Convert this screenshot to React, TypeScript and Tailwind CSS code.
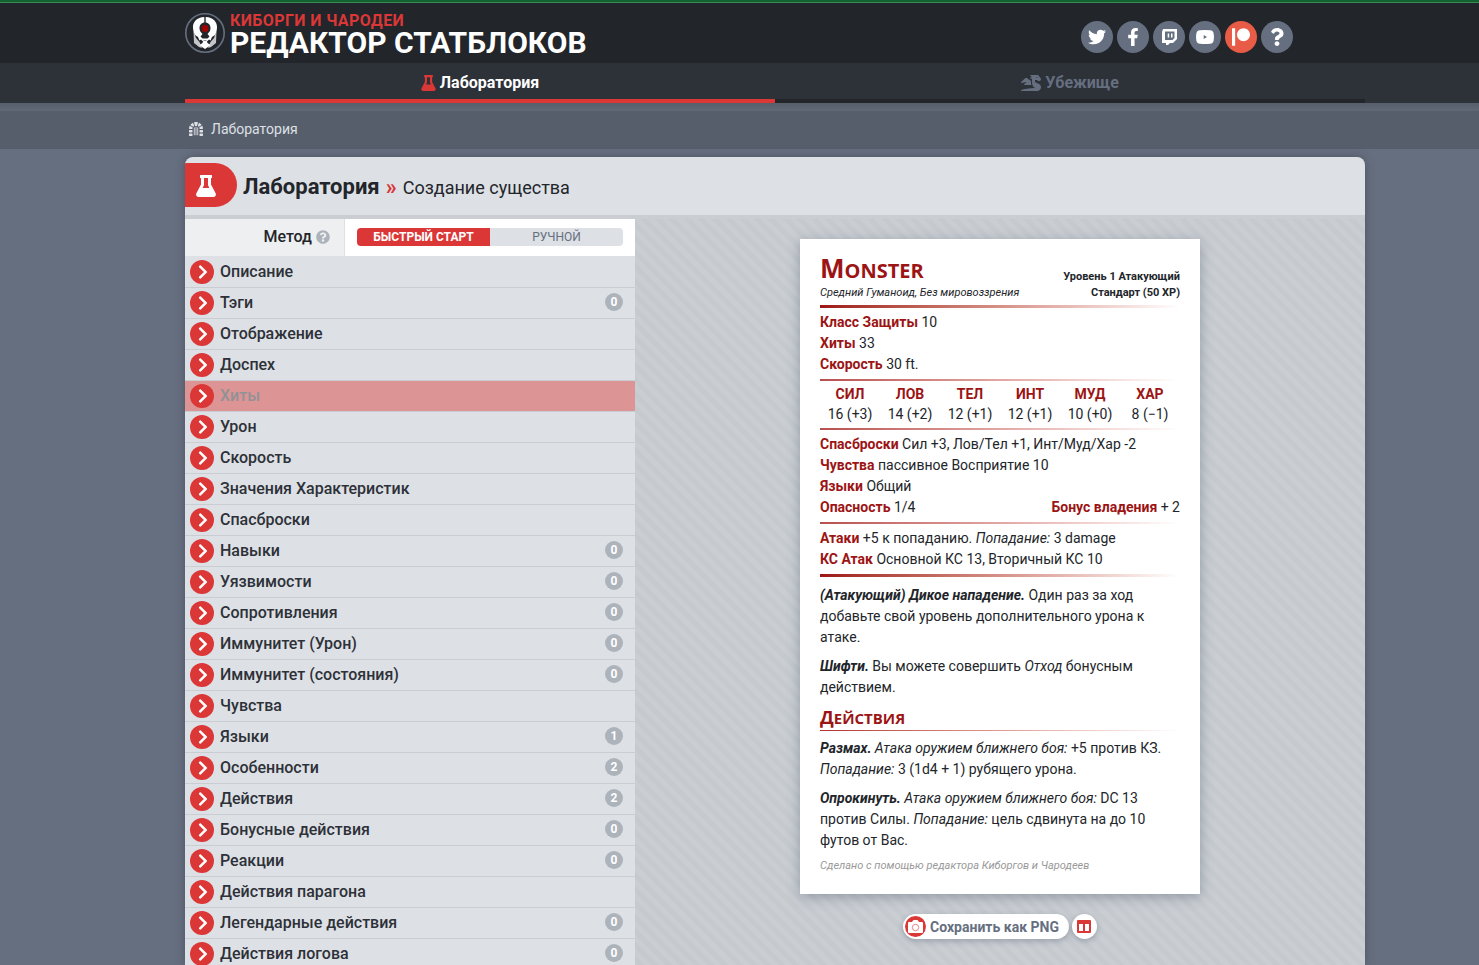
import React from "react";
import {
  FaChevronRight,
  FaDragon,
  FaDungeon,
  FaFacebookF,
  FaPatreon,
  FaQuestion,
  FaQuestionCircle,
  FaTwitter,
} from "react-icons/fa";

const sections: { label: string; count?: number; missing?: boolean }[] = [
  { label: "Описание" },
  { label: "Тэги", count: 0 },
  { label: "Отображение" },
  { label: "Доспех" },
  { label: "Хиты", missing: true },
  { label: "Урон" },
  { label: "Скорость" },
  { label: "Значения Характеристик" },
  { label: "Спасброски" },
  { label: "Навыки", count: 0 },
  { label: "Уязвимости", count: 0 },
  { label: "Сопротивления", count: 0 },
  { label: "Иммунитет (Урон)", count: 0 },
  { label: "Иммунитет (состояния)", count: 0 },
  { label: "Чувства" },
  { label: "Языки", count: 1 },
  { label: "Особенности", count: 2 },
  { label: "Действия", count: 2 },
  { label: "Бонусные действия", count: 0 },
  { label: "Реакции", count: 0 },
  { label: "Действия парагона" },
  { label: "Легендарные действия", count: 0 },
  { label: "Действия логова", count: 0 },
];

const abilities = [
  ["СИЛ", "16 (+3)"],
  ["ЛОВ", "14 (+2)"],
  ["ТЕЛ", "12 (+1)"],
  ["ИНТ", "12 (+1)"],
  ["МУД", "10 (+0)"],
  ["ХАР", "8 (−1)"],
];

function Flask({ className }: { className: string }) {
  return (
    <svg viewBox="0 0 20 22" fill="currentColor" fillRule="evenodd" className={className} aria-hidden="true">
      <path d="M4.500 0h11a.5.5 0 0 1 .5.5v2a.5.5 0 0 1-.5.5H15v6.500l4.600 8.700A2.600 2.600 0 0 1 17.400 22H2.600A2.600 2.600 0 0 1 .4 18.200L5 9.500V3h-.5a.5.5 0 0 1-.5-.5v-2a.5.5 0 0 1 .5-.5zM8 3v7l-1.300 3h6.600L12 10V3z" />
    </svg>
  );
}

function Twitch() {
  return (
    <svg viewBox="0 0 15 16" fill="currentColor" fillRule="evenodd" className="h-4 w-[15px]" aria-hidden="true">
      <path d="M1 0h14v10l-4 4H8l-2 2H4v-2H0V3zM3 2.500v8.500h7.500l2-2V2.500z" />
      <path d="M5.700 4.500h1.500v4H5.700zM9 4.500h1.500v4H9z" />
    </svg>
  );
}

function YouTube() {
  return (
    <svg viewBox="0 0 18 14" fill="currentColor" fillRule="evenodd" className="h-3.5 w-[18px]" aria-hidden="true">
      <path d="M4 .3Q9-.3 14 .3Q17.500.5 17.700 4Q18.200 7 17.700 10Q17.500 13.500 14 13.700Q9 14.300 4 13.700Q.5 13.500.3 10Q-.2 7 .3 4Q.5.5 4 .3zM7.700 5v4l3.300-2z" />
    </svg>
  );
}

function Camera() {
  return (
    <svg viewBox="0 0 15 13" className="h-[13px] w-[15px]" aria-hidden="true">
      <path d="M1 2h3l1-1.500Q5.200 0 6 0h3q.8 0 1 .5L11 2h3q1 0 1 1v9q0 1-1 1H1q-1 0-1-1V3q0-1 1-1z" fill="#fff" />
      <circle cx="7.500" cy="7.500" r="3.200" fill="none" stroke="#db3737" strokeWidth=".6" />
    </svg>
  );
}

function Columns() {
  return (
    <svg viewBox="0 0 14 13" fill="currentColor" fillRule="evenodd" className="h-[13px] w-3.5" aria-hidden="true">
      <path d="M1 0h12q1 0 1 1v11q0 1-1 1H1q-1 0-1-1V1q0-1 1-1zM2 4v7h4V4zM8 4v7h4V4z" />
    </svg>
  );
}

const socials = [
  { name: "Twitter", Icon: FaTwitter, color: "bg-[#666f80]" },
  { name: "Facebook", Icon: FaFacebookF, color: "bg-[#666f80]" },
  { name: "Twitch", Icon: Twitch, color: "bg-[#666f80]" },
  { name: "YouTube", Icon: YouTube, color: "bg-[#666f80]" },
  { name: "Patreon", Icon: FaPatreon, color: "bg-[#e85b46]" },
  { name: "Помощь", Icon: FaQuestion, color: "bg-[#666f80]" },
];

function Logo() {
  return (
    <svg viewBox="0 0 40 40" className="size-10 shrink-0" aria-hidden="true">
      <circle cx="20" cy="20" r="19.200" fill="#22252a" stroke="#666f80" strokeWidth="1.600" />
      <path d="M8.500 18 L9 30 L14 34 L17 35 L14.500 29 L11 25 Z M31.500 18 L31 30 L26 34 L23 35 L25.500 29 L29 25 Z" fill="#c4c6c9" />
      <path
        d="M19.300 4 C12 4.300 7.500 9 8 15 C8.200 18 9 20 10 22 L13 24 L14.500 27.500 L16 26.500 L18 28.500 L19 27 H21 L22 28.500 L24 26.500 L25.500 27.500 L27 24 L30 22 C31 20 31.800 18 32 15 C32.500 9 28 4.300 20.700 4 V10 H19.300 Z"
        fill="#fff"
      />
      <path d="M20 9.500 C16.500 9.500 14.300 12 14.500 15.500 C14.700 18 16 19.500 17.500 21 L15.500 23.500 L17.500 25.500 H22.500 L24.500 23.500 L22.500 21 C24 19.500 25.300 18 25.500 15.500 C25.700 12 23.500 9.500 20 9.500 Z" fill="#22252a" />
      <circle cx="20" cy="15.500" r="3.400" fill="#a00000" />
      <path d="M14.500 32 L17.500 30 L18.500 27.500 H21.500 L22.500 30 L25.500 32 L23 34 L20 36 L17 34 Z" fill="#fff" />
    </svg>
  );
}

function Term({ children }: { children: React.ReactNode }) {
  return <b className="font-bold text-[#9c1414]">{children}</b>;
}

function Rule({ thick = false }: { thick?: boolean }) {
  return thick ? (
    <div className="h-[3px] bg-linear-to-r from-[#9c1414] to-white" />
  ) : (
    <div className="h-[2px] bg-linear-to-r from-[#b84f4f] to-white" />
  );
}

function StatBlock() {
  return (
    <article className="w-full max-w-[400px] bg-white px-5 pt-4 pb-[18px] text-sm leading-[21px] text-[#22252a] shadow-[0_3px_12px_rgba(80,90,110,0.45)]">
      <header className="flex items-end justify-between pb-1">
        <div>
          <h2 className="h-[30px] font-['Open_Sans',sans-serif] text-xl leading-[30px] font-bold text-[#9c1414] uppercase first-letter:text-[26px] first-letter:leading-none">
            Monster
          </h2>
          <p className="text-[11px] leading-4 italic">Средний Гуманоид, Без мировоззрения</p>
        </div>
        <div className="text-right text-[11px] leading-4 font-bold">
          <p>Уровень 1 Атакующий</p>
          <p>Стандарт (50 XP)</p>
        </div>
      </header>
      <Rule thick />
      <div className="py-1">
        <p><Term>Класс Защиты</Term> 10</p>
        <p><Term>Хиты</Term> 33</p>
        <p><Term>Скорость</Term> 30 ft.</p>
      </div>
      <Rule />
      <table className="mt-[3px] mb-1 w-full table-fixed text-center leading-5">
        <thead>
          <tr>
            {abilities.map(([name]) => (
              <th key={name} scope="col" className="p-0 font-bold text-[#9c1414]">{name}</th>
            ))}
          </tr>
        </thead>
        <tbody>
          <tr>
            {abilities.map(([name, value]) => (
              <td key={name} className="p-0">{value}</td>
            ))}
          </tr>
        </tbody>
      </table>
      <Rule />
      <div className="py-1">
        <p><Term>Спасброски</Term> Сил +3, Лов/Тел +1, Инт/Муд/Хар -2</p>
        <p><Term>Чувства</Term> пассивное Восприятие 10</p>
        <p><Term>Языки</Term> Общий</p>
        <div className="flex justify-between">
          <p><Term>Опасность</Term> 1/4</p>
          <p><Term>Бонус владения</Term> + 2</p>
        </div>
      </div>
      <Rule />
      <div className="py-1">
        <p><Term>Атаки</Term> +5 к попаданию. <i>Попадание:</i> 3 damage</p>
        <p><Term>КС Атак</Term> Основной КС 13, Вторичный КС 10</p>
      </div>
      <Rule thick />
      <div className="flex flex-col gap-2 py-2">
        <p><b className="italic">(Атакующий) Дикое нападение.</b> Один раз за ход добавьте свой уровень дополнительного урона к атаке.</p>
        <p><b className="italic">Шифти.</b> Вы можете совершить <i>Отход</i> бонусным действием.</p>
      </div>
      <h3 className="h-6 font-['Open_Sans',sans-serif] text-[15px] leading-6 font-bold text-[#9c1414] uppercase first-letter:text-[18px] first-letter:leading-none">
        Действия
      </h3>
      <div className="h-px bg-linear-to-r from-[#b02f2f] to-white" />
      <div className="flex flex-col gap-2 pt-[7px]">
        <p><b className="italic">Размах.</b> <i>Атака оружием ближнего боя:</i> +5 против КЗ. <i>Попадание:</i> 3 (1d4 + 1) рубящего урона.</p>
        <p><b className="italic">Опрокинуть.</b> <i>Атака оружием ближнего боя:</i> DC 13 против Силы. <i>Попадание:</i> цель сдвинута на до 10 футов от Вас.</p>
      </div>
      <p className="mt-1 text-[11px] text-[#999] italic">Сделано с помощью редактора Киборгов и Чародеев</p>
    </article>
  );
}

export default function App() {
  return (
    <div className="flex h-screen flex-col overflow-hidden bg-[#666f80] font-['Roboto',sans-serif] text-[#22252a]">
      <header className="shrink-0 border-t-2 border-[#14602f] bg-[#22252a]">
        <div className="h-px bg-[#3b8a57]" />
        <div className="mr-[114px] ml-[185px] flex h-[60px] items-center justify-between pr-[72px]">
          <a href="#" className="flex items-center gap-[5px]">
            <Logo />
            <span className="flex flex-col pt-[3px] font-bold">
              <span className="text-base leading-4 tracking-wide text-[#db3737]">КИБОРГИ И ЧАРОДЕИ</span>
              <span className="text-3xl leading-7 text-white">РЕДАКТОР СТАТБЛОКОВ</span>
            </span>
          </a>
          <nav className="flex gap-1 pt-2" aria-label="Ссылки">
            {socials.map(({ name, Icon, color }) => (
              <a key={name} href="#" aria-label={name} className={`flex size-8 items-center justify-center rounded-full text-lg text-white ${color}`}>
                <Icon />
              </a>
            ))}
          </nav>
        </div>
      </header>

      <nav className="shrink-0 bg-[#2d3138] pr-[114px] pl-[185px] font-bold" aria-label="Разделы">
        <div className="grid h-10 grid-cols-2">
          <a href="#" className="flex items-center justify-center gap-1 border-b-4 border-[#db3737] pt-[3px] text-white">
            <Flask className="h-4 w-[15px] text-[#db3737]" />
            Лаборатория
          </a>
          <a href="#" className="flex items-center justify-center gap-1 border-b-4 border-[#22252a] pt-[3px] text-[#666f80]">
            <FaDragon className="h-4 w-5" />
            Убежище
          </a>
        </div>
      </nav>

      <div className="shrink-0 bg-[#575e6b]">
        <div className="h-2 bg-linear-to-b from-[#555e69] to-[#606975]" />
        <nav className="ml-[185px] flex h-[38px] items-center px-1 pb-0.5 text-sm text-[#dde0e5]" aria-label="Путь">
          <a href="#" className="flex items-center gap-2">
            <FaDungeon />
            Лаборатория
          </a>
        </nav>
      </div>

      <main className="mt-2 mr-[114px] ml-[185px] flex min-h-0 flex-1 flex-col overflow-hidden rounded-t-lg bg-[#dde0e5] shadow-[0_0_10px_rgba(34,37,42,0.35)]">
        <div className="flex h-[62px] shrink-0 items-center gap-1.5 border-b-4 border-[#caced3] pb-0.5">
          <span className="flex h-11 w-[52px] items-center rounded-r-full bg-[#db3737] pt-0.5 pl-[11px] text-white">
            <Flask className="h-[22px] w-5" />
          </span>
          <h1 className="flex items-baseline gap-1.5 pt-0.5 text-[22px] font-bold">
            Лаборатория <span className="text-[#db3737]">»</span>
            <span className="text-lg font-normal">Создание существа</span>
          </h1>
        </div>
        <div className="flex flex-1">
          <div className="w-[450px] shrink-0">
            <div className="flex h-[38px] border-b border-[#dde0e5] bg-white" role="group" aria-label="Метод">
              <div className="flex w-40 items-center justify-end gap-1 border-r border-[#dde0e5] bg-[#eeeff1] pr-3.5 pb-0.5 font-medium">
                Метод
                <FaQuestionCircle className="size-3.5 text-[#adb3ba]" />
              </div>
              <div className="flex flex-1 items-center px-3 pb-0.5 text-xs leading-[18px]">
                <button type="button" aria-pressed="true" className="flex-1 rounded-l bg-[#db3737] font-bold text-white">БЫСТРЫЙ СТАРТ</button>
                <button type="button" aria-pressed="false" className="flex-1 rounded-r bg-[#dde0e5] text-[#666f80]">РУЧНОЙ</button>
              </div>
            </div>
            {sections.map(({ label, count, missing }) => (
              <button
                key={label}
                type="button"
                className={`flex h-[31px] w-full items-center gap-1.5 border-b border-[#caced3] pr-3 pl-[5px] text-left font-medium ${missing ? "bg-[#dc9494] text-[#909296]" : "text-[#2d3138]"}`}
              >
                <span className="flex size-6 items-center justify-center rounded-full bg-[#db3737] pl-0.5 text-white">
                  <FaChevronRight />
                </span>
                <span className="flex-1">{label}</span>
                {count !== undefined && (
                  <span className="mb-0.5 flex size-[18px] items-center justify-center rounded-full bg-[#adb3ba] text-xs font-bold text-white">{count}</span>
                )}
              </button>
            ))}
          </div>
          <div className="flex flex-1 flex-col items-center gap-5 bg-[repeating-linear-gradient(45deg,#caced3_0px,#caced3_5px,#c5cacf_5px,#c5cacf_10px)] pt-5">
            <StatBlock />
            <div className="flex gap-[3px] text-sm font-bold text-[#666f80]">
              <button type="button" className="flex h-[25px] items-center gap-1 rounded-full bg-white pr-2.5 pl-0.5 shadow-[0_2px_6px_rgba(80,90,110,0.4)]">
                <span className="flex size-[21px] items-center justify-center rounded-full bg-[#db3737]">
                  <Camera />
                </span>
                Сохранить как PNG
              </button>
              <button type="button" aria-label="Две колонки" className="flex size-[25px] items-center justify-center rounded-full bg-white text-[#db3737] shadow-[0_2px_6px_rgba(80,90,110,0.4)]">
                <Columns />
              </button>
            </div>
          </div>
        </div>
      </main>
    </div>
  );
}
